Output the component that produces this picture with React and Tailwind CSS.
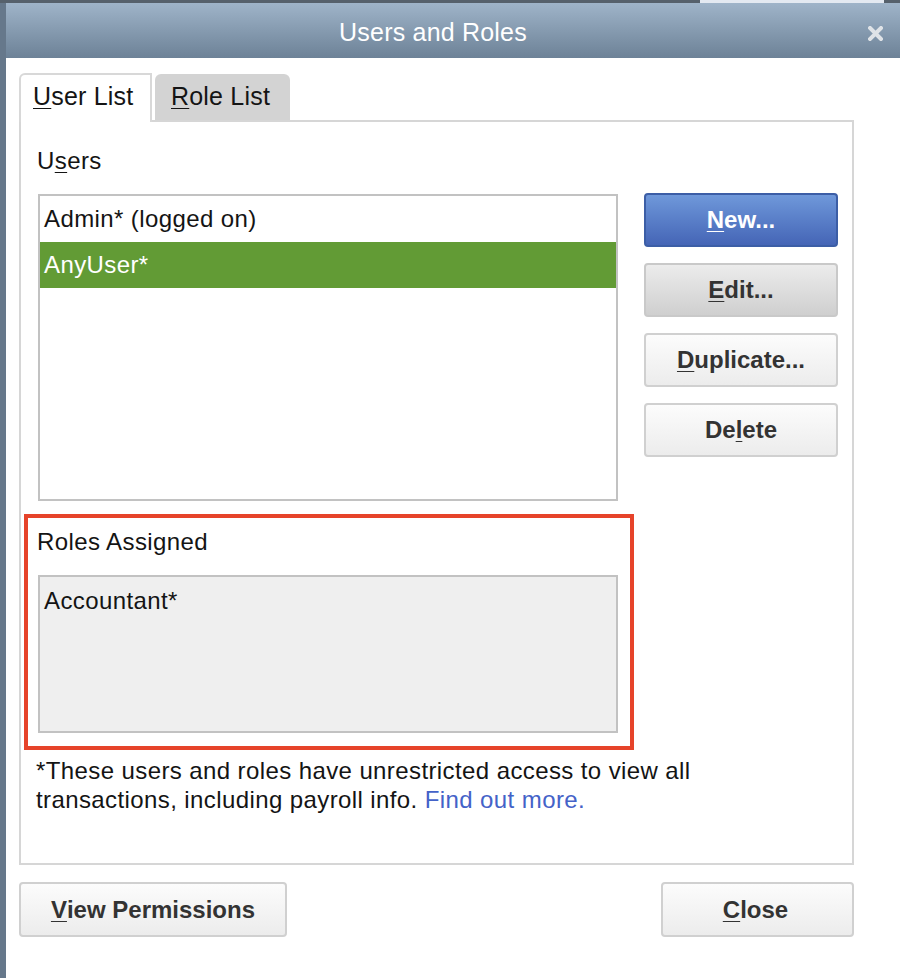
import React from 'react';

const u = (ch) => <span className="underline decoration-1 underline-offset-[3px]">{ch}</span>;

function SideButton({ variant = 'plain', children }) {
  const styles = {
    primary: 'border-[#3c5ea6] bg-gradient-to-b from-[#6f98da] to-[#4565b6] text-white',
    pressed: 'border-[#c9c9c9] bg-gradient-to-b from-[#ececec] to-[#cfcfcf] text-[#333]',
    plain: 'border-[#d0d0d0] bg-gradient-to-b from-[#fcfcfc] to-[#ececec] text-[#333]',
  };
  return (
    <button
      type="button"
      className={`flex h-[54px] w-[194px] items-center justify-center rounded-[4px] border-2 text-[24px] font-bold ${styles[variant]}`}
    >
      {children}
    </button>
  );
}

export default function App() {
  return (
    <div className="flex h-[978px] w-[900px] flex-col overflow-hidden bg-white font-['Liberation_Sans',Arial,sans-serif] text-[#141414]">
      <div className="flex h-[3px] bg-[#56616c]">
        <div className="ml-[700px] w-[184px] bg-[#e3e9f1]" />
      </div>

      <div className="flex flex-1 flex-col border-l-[6px] border-[#66788b]">
        <div className="relative flex h-[55px] items-center justify-center bg-gradient-to-b from-[#9fb4c9] to-[#6d8297] pr-[40px] pt-[5px]">
          <span className="text-[25px] tracking-[0.2px] text-white">Users and Roles</span>
          <svg className="absolute right-[17px] top-[23px]" width="15" height="15" viewBox="0 0 15 15">
            <path d="M2 2 L13 13 M13 2 L2 13" stroke="#dfe3e7" strokeWidth="4" strokeLinecap="square" />
          </svg>
        </div>

        <div className="flex flex-1 flex-col bg-white pl-[13px] pt-[15px] tracking-[0.4px]">
          <div className="relative z-10 -mb-[2px] flex h-[49px] items-end gap-[3px]">
            <div className="flex h-[49px] w-[133px] items-center rounded-tl-[6px] border-2 border-b-0 border-[#d8d8d8] bg-white pb-[3px] pl-[12px] text-[25px] tracking-[0.2px]">
              {u('U')}ser List
            </div>
            <div className="mb-[2px] flex h-[46px] w-[135px] items-center rounded-t-[6px] bg-[#d3d3d3] pl-[16px] text-[25px] tracking-[0.2px]">
              {u('R')}ole List
            </div>
          </div>

          <div className="flex h-[745px] w-[835px] flex-col border-2 border-[#d6d6d6] pl-[3px] pr-[14px]">
            <div className="flex pl-[14px] pt-[25px]">
              <div className="flex flex-col">
                <div className="-ml-[1px] h-[28px] text-[24px] leading-[28px]">U{u('s')}ers</div>
                <div className="mt-[19px] h-[307px] w-[580px] border-2 border-[#c2c2c2] bg-white">
                  <div className="flex h-[46px] items-center pl-[4px] text-[24px]">Admin* (logged on)</div>
                  <div className="flex h-[46px] items-center bg-[#629b35] pl-[4px] text-[24px] text-white">AnyUser*</div>
                </div>
              </div>
              <div className="ml-auto mt-[46px] flex flex-col gap-[16px] tracking-normal">
                <SideButton variant="primary">{u('N')}ew...</SideButton>
                <SideButton variant="pressed">{u('E')}dit...</SideButton>
                <SideButton>{u('D')}uplicate...</SideButton>
                <SideButton>De{u('l')}ete</SideButton>
              </div>
            </div>

            <div className="mt-[13px] h-[236px] w-[610px] border-4 border-[#e6432a] pl-[10px] pt-[10px]">
              <div className="-ml-[1px] h-[28px] text-[24px] leading-[28px]">Roles Assigned</div>
              <div className="mt-[19px] h-[158px] w-[580px] border-2 border-[#c2c2c2] bg-[#efefef] pl-[4px] pt-[10px] text-[24px] leading-[28px]">
                Accountant*
              </div>
            </div>

            <p className="mt-[6px] pl-[12px] text-[24px] leading-[29px]">
              *These users and roles have unrestricted access to view all
              <br />
              transactions, including payroll info.{' '}
              <span className="text-[#4462c8]">Find out more.</span>
            </p>
          </div>

          <div className="mt-[17px] flex w-[835px] justify-between tracking-normal">
            <button
              type="button"
              className="flex h-[55px] w-[268px] items-center justify-center rounded-[4px] border-2 border-[#d0d0d0] bg-gradient-to-b from-[#fcfcfc] to-[#ececec] text-[24px] font-bold text-[#333]"
            >
              {u('V')}iew Permissions
            </button>
            <button
              type="button"
              className="flex h-[55px] w-[193px] items-center justify-center rounded-[4px] border-2 border-[#d0d0d0] bg-gradient-to-b from-[#fcfcfc] to-[#ececec] pr-[4px] text-[24px] font-bold text-[#333]"
            >
              {u('C')}lose
            </button>
          </div>
        </div>
      </div>
    </div>
  );
}
